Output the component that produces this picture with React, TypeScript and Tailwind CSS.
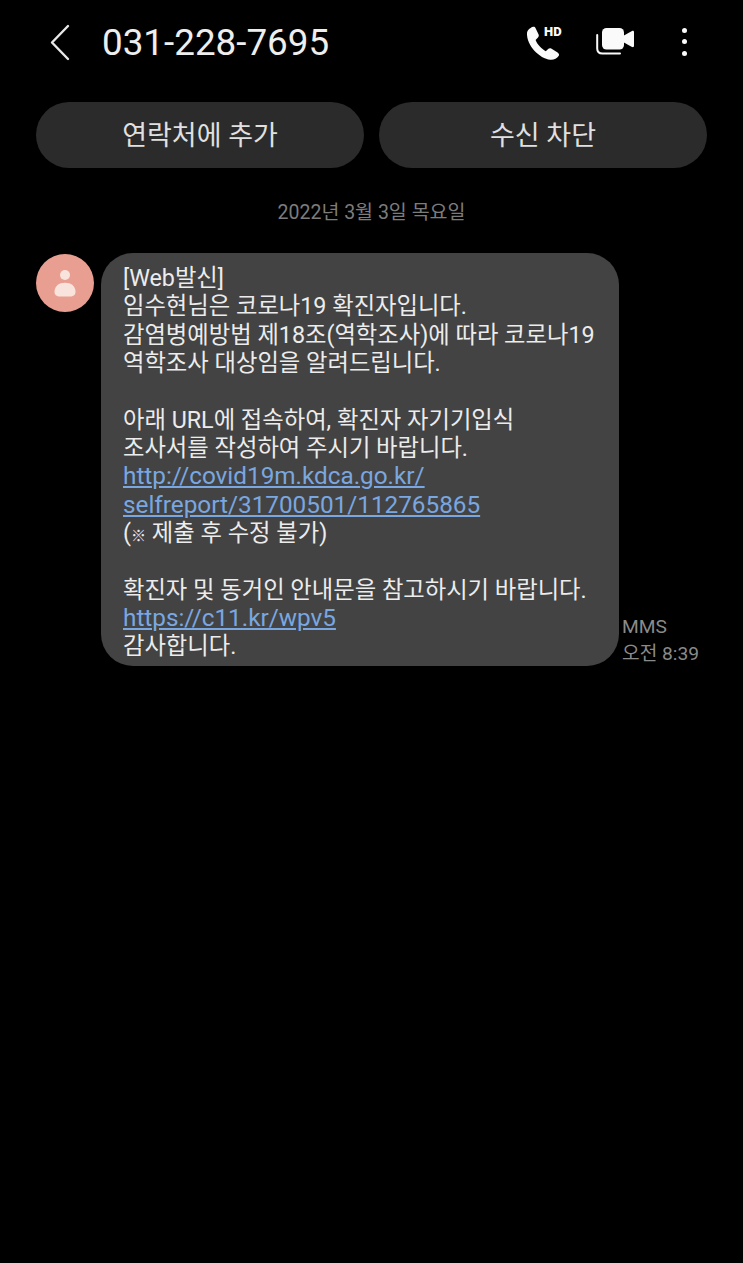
const base = "font-['Roboto','Noto_Sans_CJK_KR',sans-serif]";

function BackIcon() {
  return (
    <svg width="24" height="40" viewBox="0 0 24 40" fill="none" stroke="#e8e8e8" strokeWidth="2.4" strokeLinecap="round" strokeLinejoin="round">
      <path d="M20 4 L4 20.5 L20 37" />
    </svg>
  );
}

function CallIcon() {
  return (
    <svg width="38" height="40" viewBox="0 -4 38 40" fill="none">
      <path
        d="M1 7 C1.2 4.2 4.2 1.8 6.4 1 C8 .5 9 1 9.6 2.2 L12.6 8.6 C13 9.8 12.8 10.6 12 11.4 L9.6 14 C11 18 15.6 23 19.8 25.2 L22.4 22.8 C23.4 22 24.2 22 25.2 22.6 L31.6 26.4 C33.2 27.6 33.4 28.8 32.6 30 C31 32.4 27.6 34.2 24.4 33.8 C13.6 32.6 .4 19.6 1 7 Z"
        fill="#fafafa"
      />
      <text x="18" y="10" fill="#fafafa" fontSize="13" fontWeight="900" fontFamily="Roboto, sans-serif">HD</text>
    </svg>
  );
}

function VideoIcon() {
  return (
    <svg width="38" height="27" viewBox="0 0 38 27" fill="none">
      <path d="M1.2 7 V20.5 C1.2 24 3 25.6 6.5 25.6 H24" stroke="#fafafa" strokeWidth="2" strokeLinecap="round" />
      <rect x="6" y="0" width="22" height="21.5" rx="4.5" fill="#fafafa" />
      <path d="M27 8 L36 3 C37 2.6 38 3 38 4 V18 C38 19 37 19.4 36 19 L27 14 Z" fill="#fafafa" />
    </svg>
  );
}

function MoreIcon() {
  return (
    <div className="flex flex-col items-center gap-[6.5px]">
      <span className="w-[5px] h-[5px] rounded-full bg-[#fafafa]" />
      <span className="w-[5px] h-[5px] rounded-full bg-[#fafafa]" />
      <span className="w-[5px] h-[5px] rounded-full bg-[#fafafa]" />
    </div>
  );
}

function PersonIcon() {
  return (
    <svg width="24" height="30" viewBox="0 0 24 30" fill="#f9e4dd">
      <circle cx="12" cy="7" r="5" />
      <path d="M1.5 24 C1.5 18 6 14.8 12 14.8 C18 14.8 22.5 18 22.5 24 C22.5 27 20 28.5 17 28.5 H7 C4 28.5 1.5 27 1.5 24 Z" />
    </svg>
  );
}

function Link({ children }: { children: string }) {
  return <span className="text-[24.3px] text-[#7aa7e0] underline underline-offset-2">{children}</span>;
}

export default function App() {
  return (
    <div className={`${base} min-h-[1263px] w-[743px] bg-black text-[#ececec]`}>
      <header className="h-[83px] flex items-center pl-[48px]">
        <BackIcon />
        <h1 className="ml-[30px] pt-[3px] text-[36.8px] leading-none text-[#eeeeee]">031-228-7695</h1>
        <div className="ml-auto flex items-center">
          <CallIcon />
          <div className="ml-[32px]"><VideoIcon /></div>
          <div className="ml-[48px] mr-[56px]"><MoreIcon /></div>
        </div>
      </header>

      <div className="mt-[19px] px-[36px] flex gap-[15px]">
        <button className="h-[66px] flex-1 rounded-[33px] bg-[#2b2b2b] pt-[2px] text-[27px] text-[#e0e0e0]">연락처에 추가</button>
        <button className="h-[66px] flex-1 rounded-[33px] bg-[#2b2b2b] pt-[2px] text-[27px] text-[#e0e0e0]">수신 차단</button>
      </div>

      <p className="mt-[32px] text-center text-[19.5px] leading-[26px] text-[#7c7c7c]">2022년 3월 3일 목요일</p>

      <div className="mt-[27px] pl-[36px] flex items-start">
        <div className="mt-px w-[58px] h-[58px] rounded-full bg-[#e89f91] flex items-center justify-center">
          <PersonIcon />
        </div>
        <div className="ml-[7px] w-[518px] h-[413px] rounded-[32px] bg-[#434343] pl-[22px] pt-[11px] text-[23.3px] leading-[28.35px] whitespace-nowrap">
          <p>[Web발신]</p>
          <p>임수현님은 코로나19 확진자입니다.</p>
          <p>감염병예방법 제18조(역학조사)에 따라 코로나19</p>
          <p>역학조사 대상임을 알려드립니다.</p>
          <p>&nbsp;</p>
          <p>아래 URL에 접속하여, 확진자 자기기입식</p>
          <p>조사서를 작성하여 주시기 바랍니다.</p>
          <p className="h-[28.35px]"><Link>http://covid19m.kdca.go.kr/</Link></p>
          <p className="h-[28.35px]"><Link>selfreport/31700501/112765865</Link></p>
          <p className="h-[28.35px]">(<span className="text-[15px]">※</span> 제출 후 수정 불가)</p>
          <p>&nbsp;</p>
          <p>확진자 및 동거인 안내문을 참고하시기 바랍니다.</p>
          <p className="h-[28.35px]"><Link>https://c11.kr/wpv5</Link></p>
          <p>감사합니다.</p>
        </div>
        <div className="self-end ml-[3px] mb-[-1px] text-[19.2px] leading-[27px] text-[#8a8a8a] whitespace-nowrap">
          <p>MMS</p>
          <p>오전 8:39</p>
        </div>
      </div>
    </div>
  );
}
